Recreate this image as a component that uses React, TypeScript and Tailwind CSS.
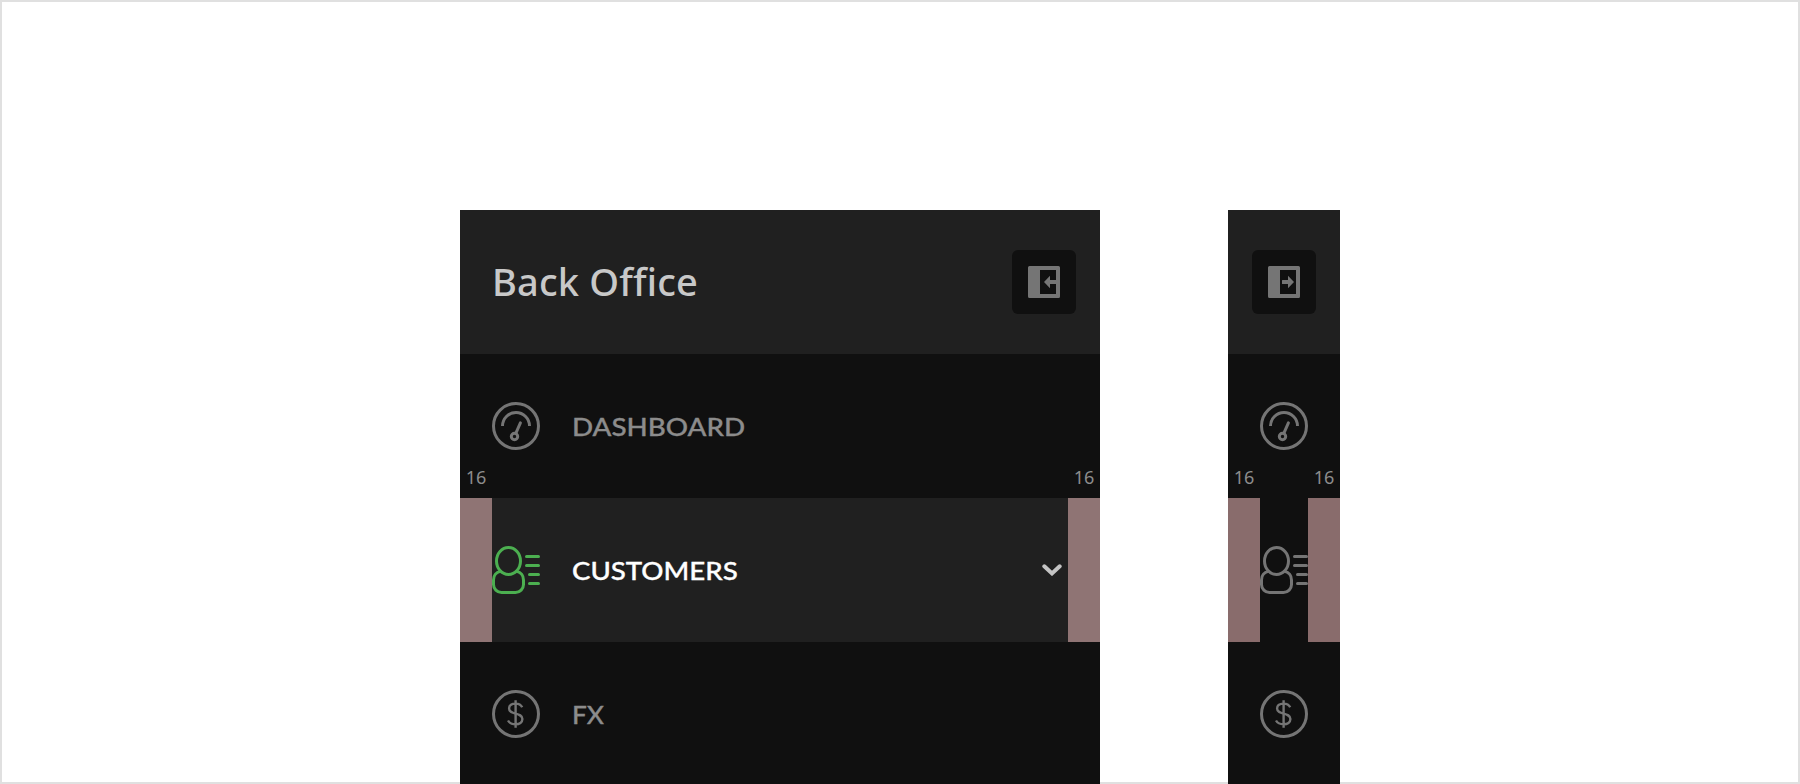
import type { ReactNode } from 'react';

function GaugeIcon() {
  return (
    <svg width="48" height="48" viewBox="0 0 48 48" fill="none" stroke="currentColor" strokeWidth="3" className="shrink-0">
      <circle cx="24" cy="24" r="22.5" />
      <path d="M10.5 24a13.5 13.5 0 0 1 27 0" />
      <circle cx="22.5" cy="34.5" r="3.2" />
      <path d="M23.8 31.4 28.4 20.8" strokeLinecap="round" />
    </svg>
  );
}

function CustomersIcon() {
  return (
    <svg width="48" height="48" viewBox="0 0 48 48" fill="none" stroke="currentColor" strokeWidth="3" strokeLinecap="round" className="shrink-0">
      <ellipse cx="16.5" cy="15" rx="12" ry="13.5" />
      <path d="M8.2 25.4C4 26.3 1.5 29.8 1.5 34v4.5a8 8 0 0 0 8 8h14a8 8 0 0 0 8-8V34c0-4.2-2.5-7.7-6.7-8.6" />
      <path d="M34.5 10.5h12M34.5 19.5h12M37.5 28.5h9M37.5 37.5h9" />
    </svg>
  );
}

function DollarIcon() {
  return (
    <svg width="48" height="48" viewBox="0 0 48 48" fill="none" stroke="currentColor" className="shrink-0">
      <circle cx="24" cy="24" r="22.5" strokeWidth="3" />
      <path d="M30.2 17.2C29 14.8 26.6 13.6 23.6 13.6c-3.8 0-6.5 1.8-6.5 4.9 0 6.8 13.3 3.5 13.3 10.6 0 3.3-2.9 5.2-6.8 5.2-3.4 0-6.2-1.4-7.6-3.8M23.6 10.3v27.4" strokeWidth="2.4" />
    </svg>
  );
}

function ToggleButton({ open }: { open: boolean }) {
  return (
    <button className="flex size-16 items-center justify-center rounded-md bg-[#101010] text-[#757575]">
      <svg width="32" height="32" viewBox="0 0 32 32" fill="currentColor">
        <path fillRule="evenodd" d="M1.5 0h29A1.5 1.5 0 0 1 32 1.5v29a1.5 1.5 0 0 1-1.5 1.5h-29A1.5 1.5 0 0 1 0 30.5v-29A1.5 1.5 0 0 1 1.5 0ZM12 4v24h16V4Z" />
        {open ? <path d="M16 16l6-6.3V14h6v4h-6v4.3Z" /> : <path d="M26 16l-6-6.3V14h-5.5a.5.5 0 0 0-.5.5v3a.5.5 0 0 0 .5.5H20v4.3Z" />}
      </svg>
    </button>
  );
}

function Spacer({ className }: { className: string }) {
  return (
    <div className={`relative w-8 shrink-0 self-stretch ${className}`}>
      <span className="absolute inset-x-0 -top-[33px] text-center text-[18px] leading-6 text-[#8c8c8c]">16</span>
    </div>
  );
}

function Row({ icon, label }: { icon: ReactNode; label?: ReactNode }) {
  return (
    <div className="flex h-36 shrink-0 items-center gap-8 px-8 text-[#757575]">
      {icon}
      {label}
    </div>
  );
}

const labelClass = "inline-block origin-left font-['Lato',sans-serif] text-[25px] leading-8 font-medium [-webkit-text-stroke:0.35px_currentColor]";

export default function App() {
  return (
    <div className="h-[784px] w-[1800px] overflow-hidden bg-white font-['Noto_Sans',sans-serif] shadow-[inset_0_0_0_2px_#e0e0e0]">
      <div className="flex h-full gap-32 pt-[210px] pl-[460px]">
        <nav className="h-[574px] w-[640px] overflow-hidden bg-[#101010]">
          <header className="flex h-36 items-center justify-between bg-[#202020] pr-6 pl-8">
            <h1 className="pb-0.5 text-[38px] leading-[52px] font-medium tracking-[0.18px] text-[#c8c8c8] [font-variant-ligatures:none]">Back Office</h1>
            <ToggleButton open />
          </header>
          <Row icon={<GaugeIcon />} label={<span className={`${labelClass} scale-x-[1.11] text-[#8c8c8c]`}>DASHBOARD</span>} />
          <div className="flex h-36 items-center bg-[#202020]">
            <Spacer className="bg-[#8f7474]" />
            <span className="text-[#4caf50]"><CustomersIcon /></span>
            <span className={`${labelClass} ml-8 scale-x-[1.105] text-white`}>CUSTOMERS</span>
            <svg width="20" height="12" viewBox="0 0 20 12" fill="none" stroke="#c4c4c4" strokeWidth="4" strokeLinecap="round" className="mr-1.5 ml-auto">
              <path d="M2.3 2.3 10 9.4l7.7-7.1" />
            </svg>
            <Spacer className="bg-[#8f7474]" />
          </div>
          <Row icon={<DollarIcon />} label={<span className={`${labelClass} scale-x-[1.05] text-[#8c8c8c]`}>FX</span>} />
        </nav>
        <nav className="h-[574px] w-28 overflow-hidden bg-[#101010]">
          <header className="flex h-36 items-center justify-center bg-[#202020]">
            <ToggleButton open={false} />
          </header>
          <Row icon={<GaugeIcon />} />
          <div className="flex h-36 items-center text-[#757575]">
            <Spacer className="bg-[#896c6c]" />
            <CustomersIcon />
            <Spacer className="bg-[#896c6c]" />
          </div>
          <Row icon={<DollarIcon />} />
        </nav>
      </div>
    </div>
  );
}
